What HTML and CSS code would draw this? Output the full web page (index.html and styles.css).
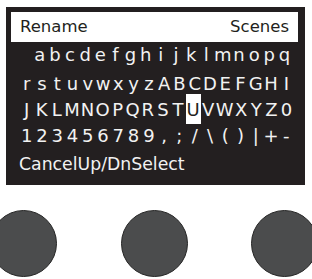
FILE: index.html
```html
<!DOCTYPE html>
<html>
<head>
<meta charset="utf-8">
<link rel="stylesheet" href="styles.css">
</head>
<body>
<div class="screen">
  <div class="header"><span>Rename</span><span>Scenes</span></div>
  <div class="keys">
    <div class="row r1"><span> </span><span>a</span><span>b</span><span>c</span><span>d</span><span>e</span><span>f</span><span>g</span><span>h</span><span>i</span><span>j</span><span>k</span><span>l</span><span>m</span><span>n</span><span>o</span><span>p</span><span>q</span></div>
    <div class="row r2"><span>r</span><span>s</span><span>t</span><span>u</span><span>v</span><span>w</span><span>x</span><span>y</span><span>z</span><span>A</span><span>B</span><span>C</span><span>D</span><span>E</span><span>F</span><span>G</span><span>H</span><span>I</span></div>
    <div class="row r3"><span>J</span><span>K</span><span>L</span><span>M</span><span>N</span><span>O</span><span>P</span><span>Q</span><span>R</span><span>S</span><span>T</span><span class="sel">U</span><span>V</span><span>W</span><span>X</span><span>Y</span><span>Z</span><span>0</span></div>
    <div class="row r4"><span>1</span><span>2</span><span>3</span><span>4</span><span>5</span><span>6</span><span>7</span><span>8</span><span>9</span><span>,</span><span>;</span><span>/</span><span>\</span><span>(</span><span>)</span><span>|</span><span>+</span><span>-</span></div>
  </div>
  <div class="soft"><span>Cancel</span><span>Up/Dn</span><span>Select</span></div>
</div>
<div class="buttons">
  <div class="knob"></div>
  <div class="knob"></div>
  <div class="knob"></div>
</div>
</body>
</html>
```
FILE: styles.css
```css
html, body {
  margin: 0;
  padding: 0;
  background: #ffffff;
  overflow: hidden;
  width: 312px;
  height: 279px;
}

.screen {
  box-sizing: border-box;
  margin: 7px 0 0 6px;
  width: 299px;
  height: 178px;
  padding: 5px 7px 0 5px;
  background: #231f20;
  font-family: "DejaVu Sans", Verdana, sans-serif;
  color: #f2f2f2;
}

.header {
  display: flex;
  justify-content: space-between;
  height: 30px;
  line-height: 30px;
  padding: 0 9px 0 9px;
  background: #ffffff;
  color: #231f20;
  font-size: 16.5px;
}

.keys {
  margin: 0 4px 0 8px;
  font-size: 18px;
}

.row {
  display: grid;
  grid-template-columns: repeat(18, 1fr);
  line-height: 26px;
  height: 26px;
}

.row span {
  text-align: center;
  white-space: pre;
}

.r1 {
  margin-left: -2px;
  margin-right: 2px;
}

.r2 {
  margin-top: 3px;
}

.sel {
  background: #ffffff;
  color: #231f20;
  margin: -3px 0 -1px;
  padding: 3px 0 1px;
}

.soft {
  display: flex;
  margin-top: 2px;
  padding-left: 8px;
  font-size: 17.3px;
  line-height: 26px;
}

.buttons {
  display: flex;
  justify-content: center;
  gap: 63.5px;
  margin: 25px 0 0 -2px;
  width: 312px;
}

.knob {
  flex: none;
  box-sizing: border-box;
  width: 67px;
  height: 67px;
  border-radius: 50%;
  background: #4b4c4d;
  border: 1.5px solid #262626;
}
```
